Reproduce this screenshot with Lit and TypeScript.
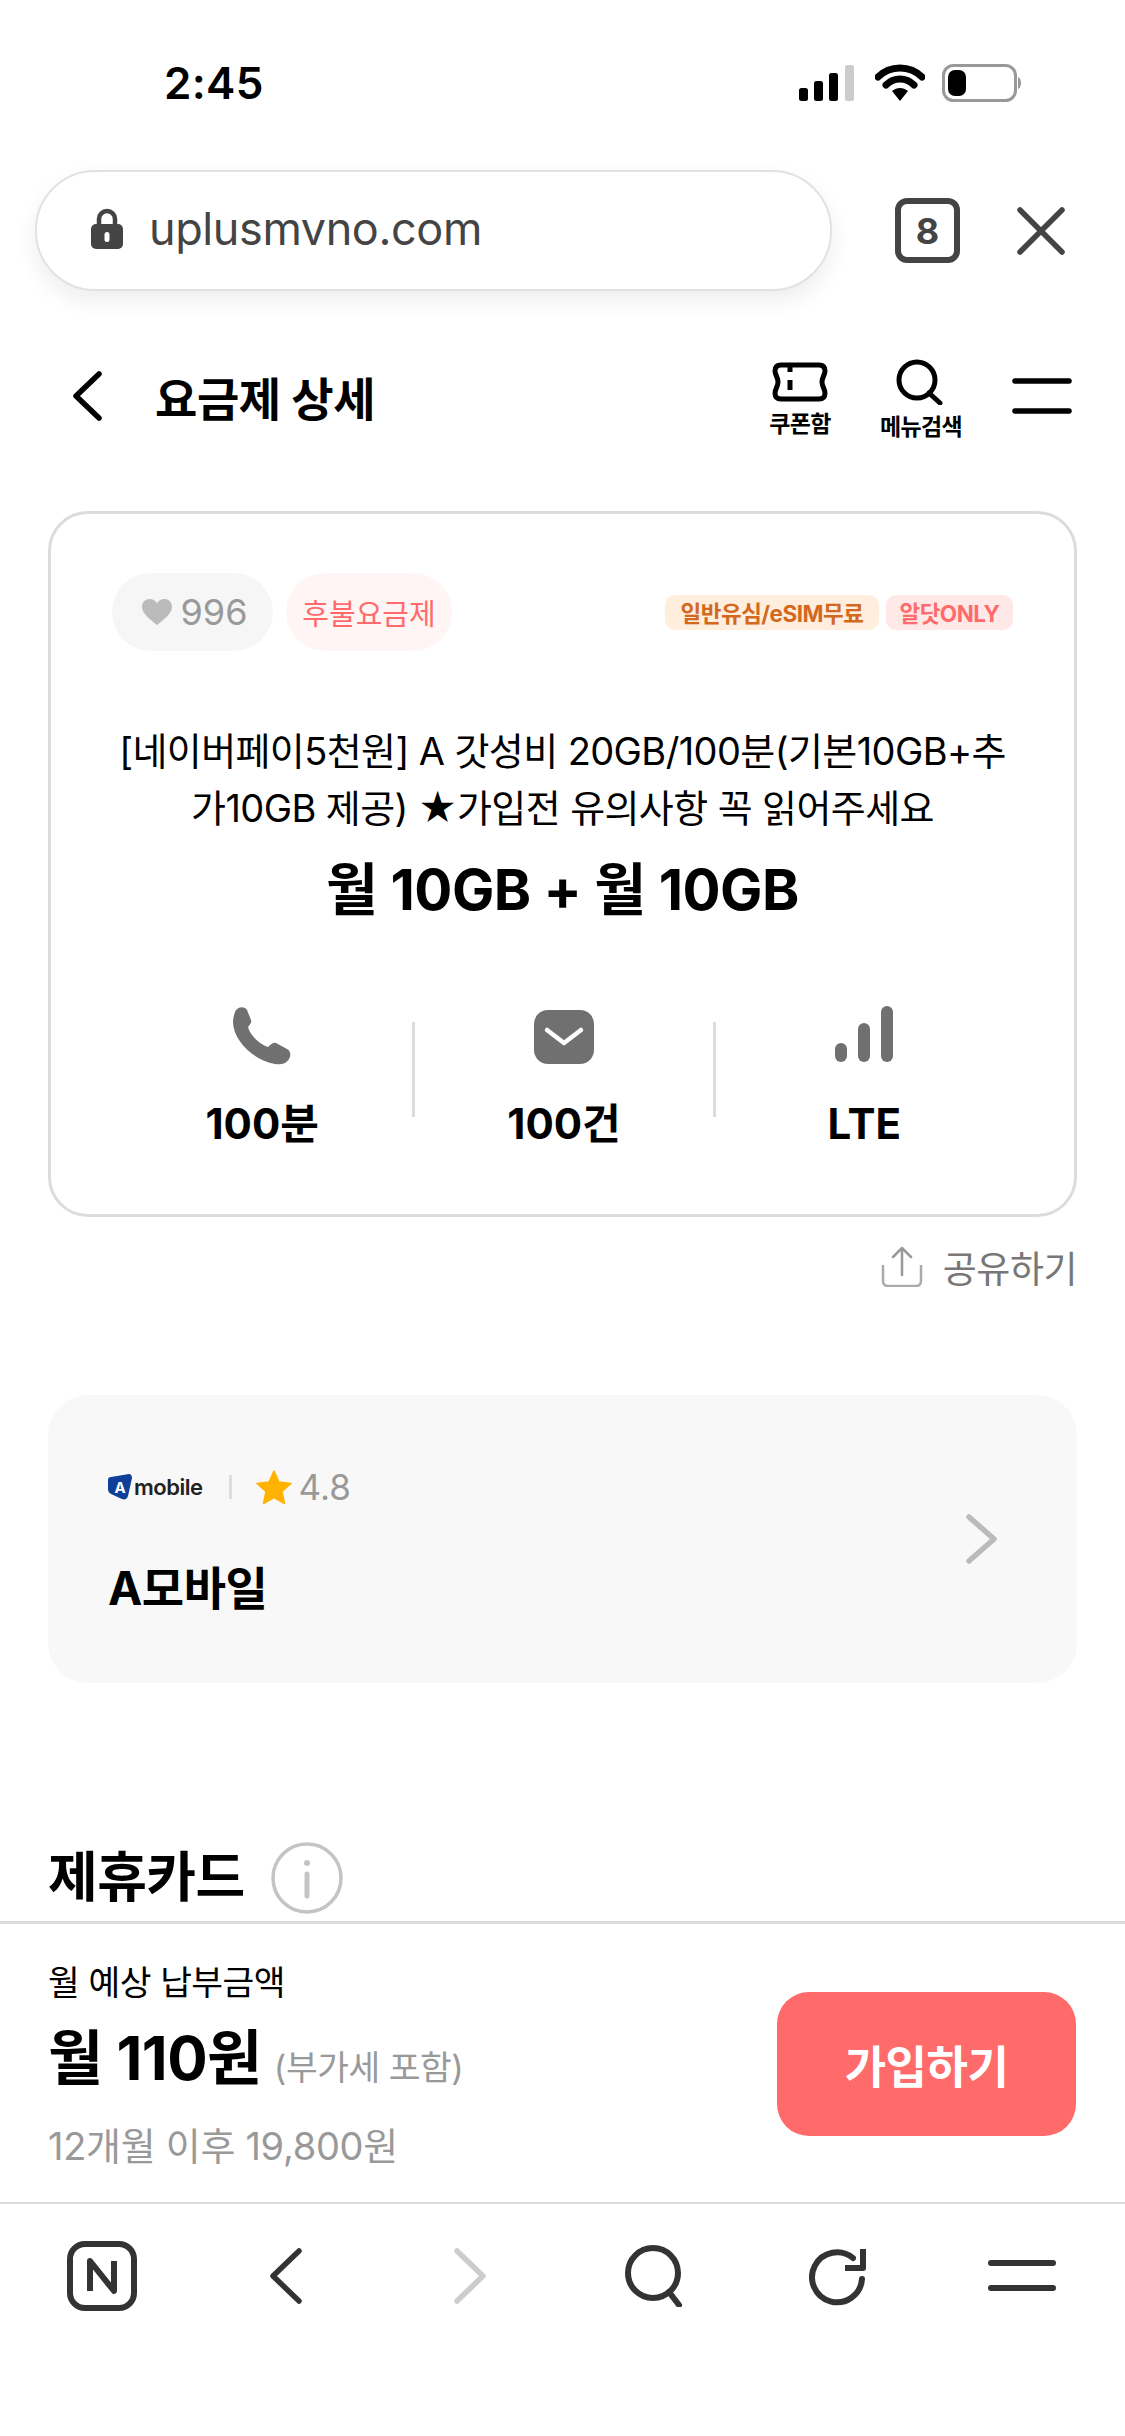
import { LitElement, html, css, svg } from "lit";
import { customElement } from "lit/decorators.js";

const ic = (w: number, h: number, vb: string, body: unknown, cls = "") =>
  html`<svg class=${cls} width=${w} height=${h} viewBox=${vb} fill="none">${body}</svg>`;

@customElement("app-root")
export class AppRoot extends LitElement {
  static styles = css`
    :host { display: block; width: 1125px; height: 2436px; background: #fff; overflow: hidden; font-family: Inter, "Noto Sans CJK KR", sans-serif; color: #000; }
    * { box-sizing: border-box; }
    .page { height: 2436px; display: flex; flex-direction: column; }
    .status { height: 170px; flex: none; display: flex; align-items: flex-start; justify-content: space-between; padding: 58px 103px 0 164px; }
    .time { font-size: 44px; font-weight: 600; line-height: 50px; letter-spacing: 0.3px; }
    .sicons { display: flex; align-items: center; gap: 17px; padding-top: 6px; }
    .urlrow { height: 121px; flex: none; display: flex; align-items: center; padding: 0 60px 0 35px; }
    .url { width: 797px; height: 121px; border-radius: 60px; border: 2px solid #e2e2e2; box-shadow: 0 10px 22px rgba(0,0,0,.07); display: flex; align-items: center; padding: 0 0 5px 53px; gap: 25px; background: #fff; }
    .url span { font-size: 45px; color: #444; letter-spacing: -0.4px; }
    .tab { margin-left: 63px; width: 65px; height: 65px; border: 6px solid #444; border-radius: 12px; display: flex; align-items: center; justify-content: center; font-size: 36px; font-weight: 700; color: #444; }
    .close { margin-left: 57px; }
    .apphead { height: 220px; flex: none; display: flex; align-items: center; padding: 0 53px 10px 72px; }
    .apptitle { font-size: 46px; font-weight: 700; margin-left: 53px; letter-spacing: -0.4px; }
    .spacer { flex: 1; }
    .hbtn { display: flex; flex-direction: column; align-items: center; gap: 7px; font-size: 23px; font-weight: 700; line-height: 30px; letter-spacing: -.6px; white-space: nowrap; margin-top: 8px; }
    .hbtn.c { width: 70px; margin-right: 41px; }
    .hbtn.s { width: 90px; margin-right: 46px; }
    .main { flex: 1; min-height: 0; overflow: hidden; padding: 0 48px; }
    .card { height: 706px; border: 3px solid #dcdcdc; border-radius: 40px; padding: 59px 61px 0; display: flex; flex-direction: column; }
    .tags { display: flex; align-items: center; gap: 13px; }
    .pill { height: 78px; border-radius: 39px; display: flex; align-items: center; justify-content: center; font-size: 32px; }
    .likes { width: 161px; background: #f6f6f6; color: #999; gap: 9px; font-size: 36px; padding-left: 4px; }
    .post { width: 166px; background: #fff5f5; color: #ff6b6b; font-size: 29px; }
    .tag { height: 35px; border-radius: 10px; display: flex; align-items: center; justify-content: center; font-size: 22.5px; font-weight: 700; letter-spacing: -.5px; white-space: nowrap; }
    .t1 { width: 214px; background: #ffeedd; color: #d2691e; margin-right: -6px; }
    .t2 { width: 127px; background: #ffe8e8; color: #ff6b6b; }
    .desc { margin-top: 72px; text-align: center; font-size: 38px; line-height: 57px; letter-spacing: -0.6px; white-space: nowrap; }
    .big { margin-top: 14px; text-align: center; font-size: 56.5px; font-weight: 700; line-height: 78px; letter-spacing: -.5px; }
    .stats { margin-top: 93px; display: grid; grid-template-columns: 1fr 1fr 1fr; }
    .stat { display: flex; flex-direction: column; align-items: center; border-left: 3px solid #dcdcdc; height: 95px; position: relative; }
    .stat:first-child { border-left: 0; }
    .stat .i { position: absolute; top: -16px; left: 50%; transform: translateX(-50%); }
    .stat .i.m { top: -12px; }
    .stat .v { position: absolute; top: 77px; left: 0; right: 0; text-align: center; font-size: 42px; font-weight: 700; line-height: 50px; white-space: nowrap; }
    .share { height: 178px; display: flex; justify-content: flex-end; align-items: flex-start; padding-top: 28px; gap: 20px; font-size: 37px; color: #777; line-height: 50px; letter-spacing: -.5px; }
    .co { height: 288px; background: #f8f8f8; border-radius: 40px; padding: 70px 60px 0; position: relative; }
    .coline { display: flex; align-items: center; height: 44px; }
    .alogo { position: relative; width: 24px; height: 26px; display: flex; align-items: center; justify-content: center; }
    .alogo svg { position: absolute; inset: 0; }
    .alogo b { position: relative; color: #fff; font-size: 15px; font-weight: 700; line-height: 1; }
    .logo { font-size: 22px; font-weight: 600; color: #222; margin-left: 2px; letter-spacing: -.5px; }
    .sep { width: 3px; height: 24px; background: #ddd; margin: 0 24px 0 27px; }
    .rate { font-size: 35px; color: #999; margin-left: 6px; }
    .coname { margin-top: 48px; font-size: 46px; font-weight: 700; line-height: 62px; letter-spacing: -.5px; }
    .chev { position: absolute; right: 79px; top: 119px; }
    .sect { margin-top: 158px; display: flex; align-items: center; gap: 26px; font-size: 54px; font-weight: 700; line-height: 74px; letter-spacing: -.5px; }
    .buy { height: 283px; flex: none; border-top: 3px solid #dcdcdc; border-bottom: 2px solid #dcdcdc; background: #fff; display: flex; align-items: center; padding: 0 49px 0 48px; justify-content: space-between; }
    .lab { font-size: 34.5px; line-height: 46px; letter-spacing: -.5px; margin-top: 4px; }
    .price { display: flex; align-items: baseline; gap: 12px; margin-top: 12px; font-size: 60px; font-weight: 700; line-height: 80px; letter-spacing: -.5px; }
    .price small { font-size: 34.5px; font-weight: 400; color: #999; letter-spacing: -.5px; }
    .after { margin-top: 13px; font-size: 38px; color: #999; line-height: 50px; letter-spacing: -.3px; }
    .btn { width: 299px; height: 144px; border-radius: 32px; background: #ff6b6b; color: #fff; font-size: 45px; font-weight: 700; display: flex; align-items: center; justify-content: center; margin-top: 2px; letter-spacing: -.5px; }
    .nav { height: 232px; flex: none; display: grid; grid-template-columns: repeat(6, 184px); grid-template-rows: 100px; padding: 22px 0 0 10px; align-items: center; justify-items: center; }
  `;

  render() {
    return html`<div class="page">
      <div class="status">
        <span class="time">2:45</span>
        <div class="sicons">
          ${ic(59, 36, "0 0 59 36", svg`<rect x="0" y="23" width="9" height="13" rx="2.5" fill="#000"/><rect x="15" y="16" width="9" height="20" rx="2.5" fill="#000"/><rect x="30" y="8" width="9" height="28" rx="2.5" fill="#000"/><rect x="46" y="0" width="9" height="36" rx="2.5" fill="#ccc"/>`)}
          ${ic(50, 38, "0 0 50 38", svg`<path d="M3 13C15 1 35 1 47 13M11 21c8-8 20-8 28 0" stroke="#000" stroke-width="7" stroke-linecap="round"/><path d="M17 27c5-4 11-4 16 0l-8 10z" fill="#000"/>`)}
          ${ic(80, 38, "0 0 80 38", svg`<rect x="1.5" y="1.5" width="72" height="35" rx="10" stroke="#999" stroke-width="3"/><rect x="6" y="6" width="18" height="26" rx="7" fill="#000"/><path d="M76 13c4 1 4 11 0 12z" fill="#999"/>`)}
        </div>
      </div>

      <div class="urlrow">
        <div class="url">
          ${ic(34, 42, "0 0 34 42", svg`<path d="M9 20v-8a8 8 0 0116 0v8" stroke="#444" stroke-width="4.5"/><rect x="1" y="17" width="32" height="25" rx="5" fill="#444"/><rect x="14.5" y="25" width="5" height="10" rx="2.5" fill="#fff"/>`)}
          <span>uplusmvno.com</span>
        </div>
        <div class="tab">8</div>
        ${ic(48, 48, "0 0 48 48", svg`<path d="M3 3l42 42M45 3L3 45" stroke="#444" stroke-width="5.5" stroke-linecap="round"/>`, "close")}
      </div>

      <div class="apphead">
        ${ic(30, 50, "0 0 30 50", svg`<path d="M27 3L4 25l23 22" stroke="#000" stroke-width="5.5" stroke-linecap="round" stroke-linejoin="round"/>`)}
        <span class="apptitle">요금제 상세</span>
        <span class="spacer"></span>
        <div class="hbtn c">
          ${ic(56, 40, "0 0 56 40", svg`<path d="M9 3H47C51 3 53 5 53 9C53 13 50 15 50 20C50 25 53 27 53 31C53 35 51 37 47 37H9C5 37 3 35 3 31C3 27 6 25 6 20C6 15 3 13 3 9C3 5 5 3 9 3Z" stroke="#000" stroke-width="5"/><path d="M18 3v7M18 18v10" stroke="#000" stroke-width="5"/>`)}
          <span>쿠폰함</span>
        </div>
        <div class="hbtn s">
          ${ic(50, 46, "0 0 50 46", svg`<circle cx="21" cy="21" r="18" stroke="#000" stroke-width="5"/><path d="M33 34l11 10" stroke="#000" stroke-width="5" stroke-linecap="round"/>`)}
          <span>메뉴검색</span>
        </div>
        ${ic(60, 36, "0 0 60 36", svg`<path d="M3 3h54M3 33h54" stroke="#000" stroke-width="5.5" stroke-linecap="round"/>`)}
      </div>

      <div class="main">
        <div class="card">
          <div class="tags">
            <div class="pill likes">${ic(30, 26, "0 0 30 26", svg`<path d="M15 26C6 19 0 14 0 7.5 0 3 3.5 0 7.5 0 10.6 0 13.5 1.6 15 4.2 16.5 1.6 19.4 0 22.5 0 26.5 0 30 3 30 7.5 30 14 24 19 15 26z" fill="#bbb"/>`)}<span>996</span></div>
            <div class="pill post">후불요금제</div>
            <span class="spacer"></span>
            <div class="tag t1">일반유심/eSIM무료</div>
            <div class="tag t2">알닷ONLY</div>
          </div>
          <div class="desc">[네이버페이5천원] A 갓성비 20GB/100분(기본10GB+추<br />가10GB 제공) ★가입전 유의사항 꼭 읽어주세요</div>
          <div class="big">월 10GB + 월 10GB</div>
          <div class="stats">
            <div class="stat">
              ${ic(60, 60, "0 0 60 60", svg`<path d="M3 6C5 0 13 0 15 4L19 14C20 17 18 18 16 21C18 29 27 38 36 41C39 39 40 36 44 37L55 43C59 45 59 50 57 53C54 58 48 59 43 58C20 54 1 33 1 16C1 12 2 9 3 6Z" fill="#707070"/>`, "i")}
              <div class="v">100분</div>
            </div>
            <div class="stat">
              ${ic(60, 54, "0 0 60 54", svg`<rect width="60" height="54" rx="14" fill="#707070"/><path d="M13 20l17 13 17-13" stroke="#fff" stroke-width="4.5" stroke-linecap="round" stroke-linejoin="round"/>`, "i m")}
              <div class="v">100건</div>
            </div>
            <div class="stat">
              ${ic(60, 56, "0 0 60 56", svg`<rect x="1" y="37" width="12" height="19" rx="6" fill="#707070"/><rect x="24" y="17" width="12" height="39" rx="6" fill="#707070"/><rect x="47" y="0" width="12" height="56" rx="6" fill="#707070"/>`, "i")}
              <div class="v">LTE</div>
            </div>
          </div>
        </div>

        <div class="share">
          ${ic(42, 42, "0 0 42 42", svg`<path d="M2 20v16c0 3 2 5 5 5h28c3 0 5-2 5-5V20" stroke="#aaa" stroke-width="2.5"/><path d="M21 30V3M12 12l9-9 9 9" stroke="#999" stroke-width="2.5" stroke-linecap="round" stroke-linejoin="round"/>`)}
          <span>공유하기</span>
        </div>

        <div class="co">
          <div class="coline">
            <div class="alogo">
              ${ic(24, 26, "0 0 24 26", svg`<path d="M3 3L21 0c2 0 3 2 3 4l-4 18c-1 3-3 4-6 3L3 20C1 19 0 17 0 15V6c0-2 1-3 3-3z" fill="#0f3f96"/>`)}
              <b>A</b>
            </div>
            <span class="logo">mobile</span>
            <span class="sep"></span>
            ${ic(36, 34, "0 0 36 34", svg`<path d="M18 1l5 11 12 1.5-9 8 2.5 12L18 27.5 7.5 33.5 10 21.5 1 13.5 13 12z" fill="#ffb300" stroke="#ffb300" stroke-width="1.5" stroke-linejoin="round"/>`)}
            <span class="rate">4.8</span>
          </div>
          <div class="coname">A모바일</div>
          ${ic(32, 50, "0 0 32 50", svg`<path d="M3 3l25 22L3 47" stroke="#bbb" stroke-width="5.5" stroke-linecap="round" stroke-linejoin="round"/>`, "chev")}
        </div>

        <div class="sect">
          <span>제휴카드</span>
          ${ic(72, 72, "0 0 72 72", svg`<circle cx="36" cy="36" r="34" stroke="#c4c4c4" stroke-width="3.5"/><circle cx="36" cy="21" r="3" fill="#c4c4c4"/><path d="M36 32v22" stroke="#c4c4c4" stroke-width="5" stroke-linecap="round"/>`)}
        </div>
      </div>

      <div class="buy">
        <div>
          <div class="lab">월 예상 납부금액</div>
          <div class="price"><span>월 110원</span><small>(부가세 포함)</small></div>
          <div class="after">12개월 이후 19,800원</div>
        </div>
        <div class="btn">가입하기</div>
      </div>

      <div class="nav">
        ${ic(70, 70, "0 0 70 70", svg`<rect x="3" y="3" width="64" height="64" rx="15" stroke="#333" stroke-width="6"/><path d="M23 50V20l24 30V20" stroke="#333" stroke-width="6" stroke-linejoin="round"/>`)}
        ${ic(34, 56, "0 0 34 56", svg`<path d="M30 3L4 28l26 25" stroke="#333" stroke-width="5.5" stroke-linecap="round" stroke-linejoin="round"/>`)}
        ${ic(34, 56, "0 0 34 56", svg`<path d="M4 3l26 25L4 53" stroke="#ccc" stroke-width="5.5" stroke-linecap="round" stroke-linejoin="round"/>`)}
        ${ic(60, 62, "0 0 60 62", svg`<circle cx="29" cy="28" r="25" stroke="#333" stroke-width="6"/><path d="M45 47l10 13" stroke="#333" stroke-width="6" stroke-linecap="round"/>`)}
        ${ic(58, 60, "0 0 58 60", svg`<path d="M53 33a25 25 0 11-9-21" stroke="#333" stroke-width="6" stroke-linecap="round"/><path d="M54 3v19H36" stroke="#333" stroke-width="6" stroke-linejoin="round"/>`)}
        ${ic(68, 34, "0 0 68 34", svg`<path d="M3 4h62M3 29h62" stroke="#333" stroke-width="6" stroke-linecap="round"/>`)}
      </div>
    </div>`;
  }
}
